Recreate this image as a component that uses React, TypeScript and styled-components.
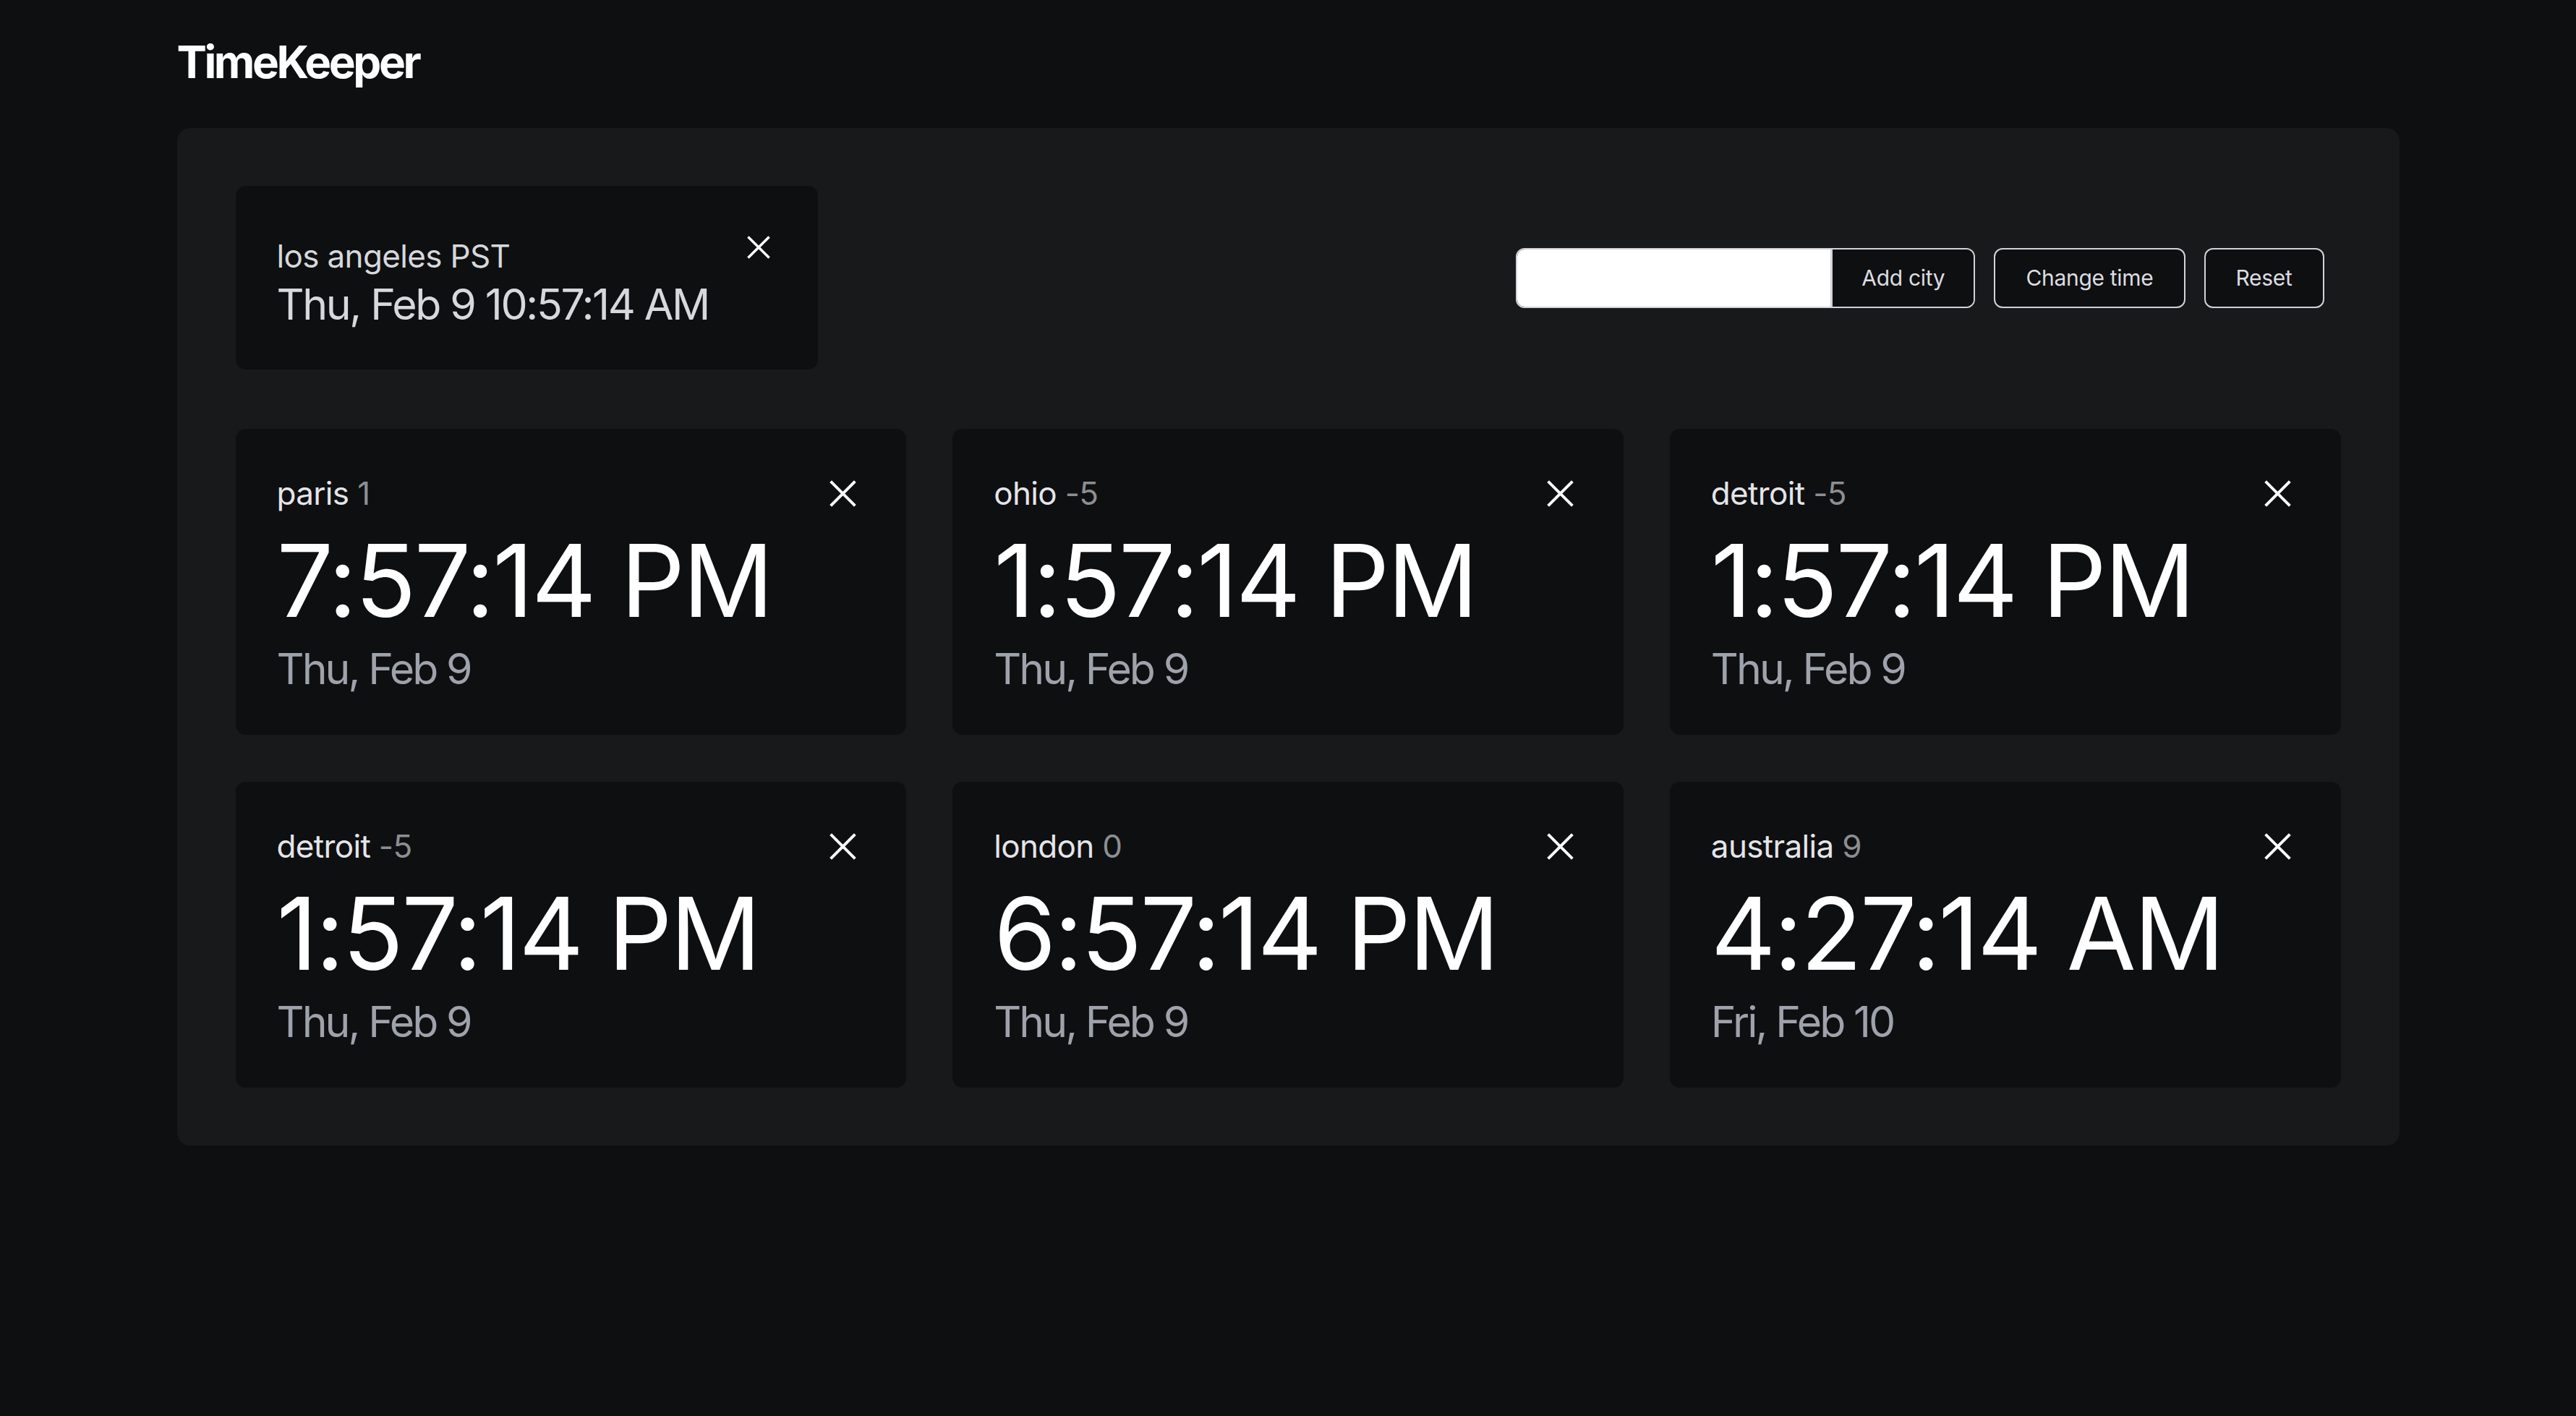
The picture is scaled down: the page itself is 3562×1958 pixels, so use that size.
import * as React from 'react';
import styled, { createGlobalStyle } from 'styled-components';

const GlobalStyle = createGlobalStyle`
    html, body {
        margin: 0;
        padding: 0;
        background: #0e0f11;
    }
    body {
        font-family: Inter, 'Noto Sans', 'Liberation Sans', sans-serif;
        color: #ffffff;
    }
    * {
        box-sizing: border-box;
    }
`;

const Page = styled.div`
    min-height: 1958px;
    padding-top: 49px;
    background: #0e0f11;
`;

const Container = styled.div`
    width: 3073px;
    margin: 0 auto;
`;

const Title = styled.h1`
    margin: 0 0 54px;
    font-size: 62px;
    line-height: 74px;
    font-weight: 700;
    letter-spacing: -0.055em;
    color: #ffffff;
`;

const Panel = styled.main`
    background: #18191b;
    border-radius: 18px;
    padding: 80px 81px;
`;

const TopRow = styled.div`
    display: flex;
    align-items: center;
    justify-content: space-between;
    margin-bottom: 82px;
`;

const Card = styled.div`
    background: #0e0f11;
    border-radius: 14px;
`;

const HomeCard = styled(Card)`
    width: 805px;
    height: 254px;
    display: flex;
    justify-content: space-between;
    align-items: flex-start;
    padding: 71px 66px 0 57px;
`;

const HomeText = styled.div`
    display: flex;
    flex-direction: column;
`;

const Label = styled.div`
    font-size: 44px;
    line-height: 52px;
    color: #e4e5e8;
    letter-spacing: -0.015em;
`;

const HomeLabel = styled(Label)`
    color: #d6d8dc;
`;

const HomeDateTime = styled.div`
    margin-top: 5px;
    font-size: 59px;
    line-height: 71px;
    color: #d6d8dc;
    letter-spacing: -0.04em;
`;

const Offset = styled.span`
    color: #8d8e92;
`;

const CloseButton = styled.button<{ size: number }>`
    display: flex;
    align-items: center;
    justify-content: center;
    width: ${({ size }) => size}px;
    height: ${({ size }) => size}px;
    padding: 0;
    border: none;
    background: transparent;
    color: #ffffff;
    cursor: pointer;
    flex-shrink: 0;
`;

const HomeClose = styled(CloseButton)`
    margin-top: -2px;
`;

const Controls = styled.div`
    display: flex;
    align-items: center;
    gap: 26px;
    margin-right: 23px;
`;

const InputGroup = styled.div`
    display: flex;
    height: 83px;
    border: 2px solid #d1d3d8;
    border-radius: 12px;
    overflow: hidden;
`;

const CityInput = styled.input`
    width: 436px;
    height: 100%;
    border: none;
    border-right: 3px solid #d1d3d8;
    background: #ffffff;
    outline: none;
    font-family: inherit;
    font-size: 30px;
    padding: 0 20px;
`;

const Button = styled.button<{ grouped?: boolean }>`
    height: ${({ grouped }) => (grouped ? '100%' : '83px')};
    padding: 0 ${({ grouped }) => (grouped ? '40px' : '42px')};
    border: ${({ grouped }) => (grouped ? 'none' : '2px solid #d1d3d8')};
    border-radius: ${({ grouped }) => (grouped ? '0' : '12px')};
    background: #0e0f11;
    color: #dcdde0;
    font-family: inherit;
    font-size: 30px;
    letter-spacing: -0.01em;
    cursor: pointer;
`;

const Grid = styled.div`
    display: grid;
    grid-template-columns: repeat(3, 1fr);
    gap: 65px 64px;
`;

const CityCard = styled(Card)`
    height: 423px;
    padding: 63px 69px 0 57px;
    display: flex;
    flex-direction: column;
`;

const CardHeader = styled.div`
    display: flex;
    align-items: center;
    justify-content: space-between;
`;

const Time = styled.div`
    margin-top: 25px;
    font-size: 139px;
    line-height: 139px;
    color: #ffffff;
    letter-spacing: -0.02em;
    white-space: nowrap;
`;

const DateText = styled.div`
    margin-top: 17px;
    font-size: 59px;
    line-height: 71px;
    color: #9ea2ab;
    letter-spacing: -0.05em;
`;

const CloseIcon = ({ size }: { size: number }) => (
    <svg width={size} height={size} viewBox="0 0 24 24" fill="none">
        <path d="M2 2L22 22M22 2L2 22" stroke="currentColor" strokeWidth="2.6" strokeLinecap="square" />
    </svg>
);

interface City {
    name: string;
    offset: string;
    time: string;
    date: string;
}

const cities: City[] = [
    { name: 'paris', offset: '1', time: '7:57:14 PM', date: 'Thu, Feb 9' },
    { name: 'ohio', offset: '-5', time: '1:57:14 PM', date: 'Thu, Feb 9' },
    { name: 'detroit', offset: '-5', time: '1:57:14 PM', date: 'Thu, Feb 9' },
    { name: 'detroit', offset: '-5', time: '1:57:14 PM', date: 'Thu, Feb 9' },
    { name: 'london', offset: '0', time: '6:57:14 PM', date: 'Thu, Feb 9' },
    { name: 'australia', offset: '9', time: '4:27:14 AM', date: 'Fri, Feb 10' },
];

const App = (): JSX.Element => {
    return (
        <Page>
            <GlobalStyle />
            <Container>
                <Title>TimeKeeper</Title>
                <Panel>
                    <TopRow>
                        <HomeCard>
                            <HomeText>
                                <HomeLabel>los angeles PST</HomeLabel>
                                <HomeDateTime>Thu, Feb 9 10:57:14 AM</HomeDateTime>
                            </HomeText>
                            <HomeClose size={32} aria-label="remove">
                                <CloseIcon size={32} />
                            </HomeClose>
                        </HomeCard>
                        <Controls>
                            <InputGroup>
                                <CityInput type="text" />
                                <Button grouped>Add city</Button>
                            </InputGroup>
                            <Button>Change time</Button>
                            <Button>Reset</Button>
                        </Controls>
                    </TopRow>
                    <Grid>
                        {cities.map((city, i) => (
                            <CityCard key={i}>
                                <CardHeader>
                                    <Label>
                                        {city.name} <Offset>{city.offset}</Offset>
                                    </Label>
                                    <CloseButton size={37} aria-label="remove">
                                        <CloseIcon size={37} />
                                    </CloseButton>
                                </CardHeader>
                                <Time>{city.time}</Time>
                                <DateText>{city.date}</DateText>
                            </CityCard>
                        ))}
                    </Grid>
                </Panel>
            </Container>
        </Page>
    );
};

export default App;
